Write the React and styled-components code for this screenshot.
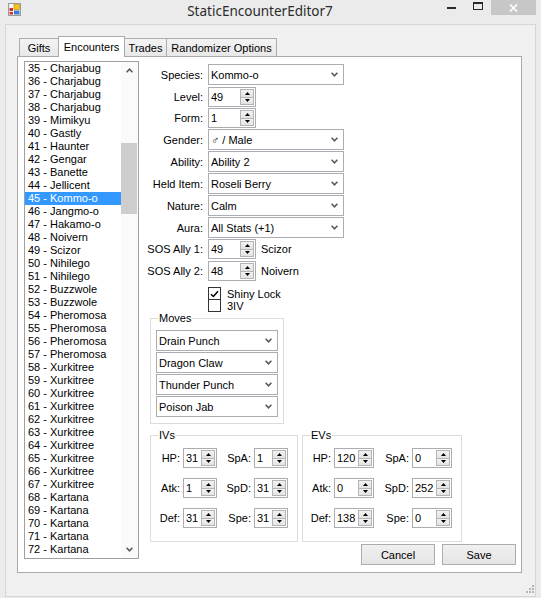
import React from 'react';
import styled, { createGlobalStyle } from 'styled-components';

const GlobalStyle = createGlobalStyle`
  html, body { margin: 0; padding: 0; background: #ebebeb; }
  * { box-sizing: border-box; }
  body {
    font-family: "Liberation Sans", Arial, sans-serif;
    font-size: 11px;
    color: #000;
  }
`;

const Window = styled.div`
  width: 541px;
  height: 598px;
  display: flex;
  flex-direction: column;
  padding: 0 5px 1px 5px;
  background-color: #ebebeb;
  overflow: hidden;
`;

const TitleBar = styled.div`
  height: 24px;
  flex-shrink: 0;
  display: flex;
  align-items: flex-start;
`;

const AppIcon = styled.svg`
  margin: 3px 0 0 3px;
  flex-shrink: 0;
`;

const Title = styled.div`
  flex: 1;
  text-align: center;
  padding: 3px 0 0 52px;
  font-family: "Noto Sans", "Open Sans", sans-serif;
  font-size: 13.5px;
  line-height: 16px;
  color: #2b2b2b;
`;

const Caption = styled.div`
  display: flex;
  align-items: flex-start;
`;

const MinGlyph = styled.div`
  width: 9px;
  height: 2px;
  background: #2a2a2a;
  margin: 7px 17px 0 0;
`;

const MaxGlyph = styled.div`
  width: 10px;
  height: 8px;
  border: 1px solid #2a2a2a;
  border-top-width: 2px;
  margin: 2px 8px 0 0;
`;

const CloseBtn = styled.div`
  width: 45px;
  height: 15px;
  background: #c7c7c7;
  display: flex;
  align-items: center;
  justify-content: center;
`;

const Client = styled.div`
  flex: 1;
  display: flex;
  flex-direction: column;
  background: #f0f0f0;
  border: 1px solid #d6d6d6;
  padding-top: 11px;
`;

const TabStrip = styled.div`
  height: 20px;
  display: flex;
  align-items: flex-end;
  margin-left: 13px;
`;

const Tab = styled.div`
  width: ${p => p.$w}px;
  height: ${p => (p.$active ? 21 : 18)}px;
  margin-bottom: ${p => (p.$active ? -1 : 0)}px;
  margin-left: ${p => (p.$first ? 0 : -1)}px;
  border: 1px solid #acacac;
  border-bottom: none;
  background: ${p => (p.$active ? '#fff' : 'linear-gradient(#f3f3f3, #e8e8e8)')};
  display: flex;
  align-items: center;
  justify-content: center;
  white-space: nowrap;
  padding-top: ${p => (p.$active ? 0 : 1)}px;
  position: relative;
  z-index: ${p => (p.$active ? 1 : 0)};
`;

const TabPage = styled.div`
  height: 517px;
  margin: 0 13px 0 11px;
  background: #fff;
  border: 1px solid #a9a9a9;
  display: flex;
  align-items: flex-start;
  padding: 4px 0 0 6px;
`;

const Footer = styled.div`
  flex: 1;
  display: flex;
  justify-content: flex-end;
  align-items: flex-end;
  padding: 0 0 2px 0;
`;

/* list box */
const ListBox = styled.div`
  width: 115px;
  height: 498px;
  flex-shrink: 0;
  border: 1px solid #a0a0a0;
  background: #fff;
  display: flex;
  overflow: hidden;
`;

const Items = styled.div`
  flex: 1;
  overflow: hidden;
`;

const Item = styled.div`
  height: 13px;
  line-height: 13px;
  padding-left: 3px;
  white-space: nowrap;
  background: ${p => (p.$selected ? '#3399ff' : 'transparent')};
  color: ${p => (p.$selected ? '#fff' : '#000')};
`;

const ScrollBar = styled.div`
  width: 17px;
  display: flex;
  flex-direction: column;
  background: #fafafa;
`;

const ScrollArrow = styled.div`
  height: 17px;
  display: flex;
  align-items: center;
  justify-content: center;
`;

const Thumb = styled.div`
  width: 16px;
  height: ${p => p.$h}px;
  margin-top: ${p => p.$top}px;
  background: #cdcdcd;
`;

const Spacer = styled.div`
  flex: 1;
`;

/* editor side */
const Editor = styled.div`
  flex: 1;
  display: flex;
  flex-direction: column;
  margin-left: 7px;
`;

const Field = styled.div`
  display: flex;
  align-items: center;
  height: ${p => p.$h}px;
  margin-top: ${p => p.$mt}px;
`;

const FieldLabel = styled.span`
  width: 57px;
  margin-right: 5px;
  text-align: right;
  white-space: nowrap;
`;

const SideText = styled.span`
  margin-left: 5px;
`;

const ComboBox = styled.div`
  width: ${p => p.$w}px;
  height: 21px;
  border: 1px solid #abadb3;
  background: #fff;
  display: flex;
  align-items: center;
  padding-left: 2px;
`;

const ComboText = styled.span`
  flex: 1;
  white-space: nowrap;
  overflow: hidden;
`;

const ComboArrow = styled.span`
  width: 17px;
  align-self: stretch;
  display: flex;
  align-items: center;
  justify-content: center;
`;

const NumBox = styled.div`
  width: ${p => p.$w}px;
  height: 20px;
  border: 1px solid #abadb3;
  background: #fff;
  display: flex;
`;

const NumText = styled.span`
  flex: 1;
  padding-left: 2px;
  line-height: 18px;
`;

const Spin = styled.div`
  width: 15px;
  display: flex;
  flex-direction: column;
  padding: 1px 1px 1px 0;
`;

const SpinBtn = styled.div`
  flex: 1;
  border: 1px solid #b4b4b4;
  margin-top: ${p => (p.$down ? -1 : 0)}px;
  background: linear-gradient(#f2f2f2, #e3e3e3);
  display: flex;
  align-items: center;
  justify-content: center;
`;

const CheckRow = styled.div`
  display: flex;
  align-items: center;
  height: 13px;
  margin-top: ${p => p.$mt}px;
  padding-left: 62px;
`;

const CheckBox = styled.div`
  width: 13px;
  height: 13px;
  flex-shrink: 0;
  border: 1px solid #333;
  background: #fff;
  display: flex;
  align-items: center;
  justify-content: center;
  overflow: hidden;
`;

const CheckText = styled.span`
  margin-left: 6px;
`;

const Group = styled.div`
  width: ${p => p.$w}px;
  height: ${p => p.$h}px;
  flex-shrink: 0;
  border: 1px solid #dcdcdc;
  margin-top: ${p => p.$mt || 0}px;
  margin-left: ${p => p.$ml || 0}px;
`;

const GroupTitle = styled.div`
  width: fit-content;
  margin: -7px 0 0 7px;
  padding: 0 1px;
  background: #fff;
  line-height: 13px;
`;

const MoveList = styled.div`
  display: flex;
  flex-direction: column;
  gap: 1px;
  margin: 5px 5px 0 5px;
`;

const GroupRow = styled.div`
  display: flex;
  gap: 4px;
  margin: 11px 0 0 4px;
`;

const StatGrid = styled.div`
  display: grid;
  grid-template-columns: ${p => p.$cols};
  grid-auto-rows: 20px;
  column-gap: 3px;
  row-gap: 10px;
  align-items: center;
  margin: 6px 0 0 2px;
`;

const StatLabel = styled.span`
  text-align: right;
  white-space: nowrap;
`;

const ButtonRow = styled.div`
  display: flex;
  justify-content: flex-end;
  gap: 7px;
  margin: 2px 5px 0 0;
`;

const Button = styled.div`
  width: 74px;
  height: 21px;
  border: 1px solid #acacac;
  background: linear-gradient(#f0f0f0, #e5e5e5);
  display: flex;
  align-items: center;
  justify-content: center;
`;

/* small drawings */
const Chevron = ({ up }) => (
  <svg width="7" height="5" viewBox="0 0 7 5">
    <path d={up ? 'M0.6 4.2 L3.5 1.2 L6.4 4.2' : 'M0.6 0.8 L3.5 3.8 L6.4 0.8'} fill="none" stroke="#5a5a5a" strokeWidth="1.6" />
  </svg>
);

const Tri = ({ down }) => (
  <svg width="5" height="3" viewBox="0 0 5 3">
    <path d={down ? 'M0 0 H5 L2.5 3 Z' : 'M0 3 H5 L2.5 0 Z'} fill="#000" />
  </svg>
);

const Combo = ({ w = 136, children }) => (
  <ComboBox $w={w}>
    <ComboText>{children}</ComboText>
    <ComboArrow><Chevron /></ComboArrow>
  </ComboBox>
);

const Numeric = ({ w = 48, value }) => (
  <NumBox $w={w}>
    <NumText>{value}</NumText>
    <Spin>
      <SpinBtn><Tri /></SpinBtn>
      <SpinBtn $down><Tri down /></SpinBtn>
    </Spin>
  </NumBox>
);

const Check = ({ checked, label, mt }) => (
  <CheckRow $mt={mt}>
    <CheckBox>
      {checked && (
        <svg width="9" height="8" viewBox="0 0 9 8">
          <path d="M1 4.2 L3.4 6.5 L8 1.2" fill="none" stroke="#000" strokeWidth="1.5" />
        </svg>
      )}
    </CheckBox>
    <CheckText>{label}</CheckText>
  </CheckRow>
);

const names = {
  35: 'Charjabug', 36: 'Charjabug', 37: 'Charjabug', 38: 'Charjabug', 39: 'Mimikyu',
  40: 'Gastly', 41: 'Haunter', 42: 'Gengar', 43: 'Banette', 44: 'Jellicent',
  45: 'Kommo-o', 46: 'Jangmo-o', 47: 'Hakamo-o', 48: 'Noivern', 49: 'Scizor',
  50: 'Nihilego', 51: 'Nihilego', 52: 'Buzzwole', 53: 'Buzzwole', 54: 'Pheromosa',
  55: 'Pheromosa', 56: 'Pheromosa', 57: 'Pheromosa',
};
const encounters = [];
for (let i = 35; i <= 72; i++) {
  encounters.push({ id: i, name: names[i] || (i <= 67 ? 'Xurkitree' : 'Kartana') });
}

const ivs = [['HP:', '31', 'SpA:', '1'], ['Atk:', '1', 'SpD:', '31'], ['Def:', '31', 'Spe:', '31']];
const evs = [['HP:', '120', 'SpA:', '0'], ['Atk:', '0', 'SpD:', '252'], ['Def:', '138', 'Spe:', '0']];

const StatBox = ({ title, w, cols, numW, rows }) => (
  <Group $w={w} $h={107}>
    <GroupTitle>{title}</GroupTitle>
    <StatGrid $cols={cols}>
      {rows.map(r => (
        <React.Fragment key={r[0]}>
          <StatLabel>{r[0]}</StatLabel>
          <Numeric w={numW[0]} value={r[1]} />
          <StatLabel>{r[2]}</StatLabel>
          <Numeric w={numW[1]} value={r[3]} />
        </React.Fragment>
      ))}
    </StatGrid>
  </Group>
);

export default function App() {
  return (
    <>
      <GlobalStyle />
      <Window>
        <TitleBar>
          <AppIcon width="13" height="13" viewBox="0 0 13 13">
            <rect x="0.5" y="0.5" width="12" height="12" fill="#f4f4f4" stroke="#9a9a9a" />
            <rect x="6" y="1.5" width="5.5" height="5" fill="#f2c418" stroke="#c28a00" strokeWidth="0.6" />
            <rect x="1.5" y="5" width="3.5" height="3" fill="#d62c2c" />
            <rect x="1.5" y="9" width="3.5" height="2.5" fill="#d62c2c" />
            <rect x="6" y="7.5" width="5.5" height="4" fill="#3a7bd5" />
          </AppIcon>
          <Title>StaticEncounterEditor7</Title>
          <Caption>
            <MinGlyph />
            <MaxGlyph />
            <CloseBtn>
              <svg width="9" height="8" viewBox="0 0 9 8">
                <path d="M1 0.5 L8 7.5 M8 0.5 L1 7.5" stroke="#fff" strokeWidth="1.6" />
              </svg>
            </CloseBtn>
          </Caption>
        </TitleBar>

        <Client>
          <TabStrip>
            <Tab $first $w={40}>Gifts</Tab>
            <Tab $active $w={67}>Encounters</Tab>
            <Tab $w={43}>Trades</Tab>
            <Tab $w={111}>Randomizer Options</Tab>
          </TabStrip>

          <TabPage>
            <ListBox>
              <Items>
                {encounters.map(e => (
                  <Item key={e.id} $selected={e.id === 45}>{e.id} - {e.name}</Item>
                ))}
              </Items>
              <ScrollBar>
                <ScrollArrow><Chevron up /></ScrollArrow>
                <Thumb $top={64} $h={71} />
                <Spacer />
                <ScrollArrow><Chevron /></ScrollArrow>
              </ScrollBar>
            </ListBox>

            <Editor>
              <Field $h={21} $mt={3}><FieldLabel>Species:</FieldLabel><Combo>Kommo-o</Combo></Field>
              <Field $h={20} $mt={2}><FieldLabel>Level:</FieldLabel><Numeric value="49" /></Field>
              <Field $h={20} $mt={1}><FieldLabel>Form:</FieldLabel><Numeric value="1" /></Field>
              <Field $h={21} $mt={1}><FieldLabel>Gender:</FieldLabel><Combo>♂ / Male</Combo></Field>
              <Field $h={21} $mt={1}><FieldLabel>Ability:</FieldLabel><Combo>Ability 2</Combo></Field>
              <Field $h={21} $mt={1}><FieldLabel>Held Item:</FieldLabel><Combo>Roseli Berry</Combo></Field>
              <Field $h={21} $mt={1}><FieldLabel>Nature:</FieldLabel><Combo>Calm</Combo></Field>
              <Field $h={21} $mt={1}><FieldLabel>Aura:</FieldLabel><Combo>All Stats (+1)</Combo></Field>
              <Field $h={20} $mt={1}>
                <FieldLabel>SOS Ally 1:</FieldLabel><Numeric value="49" /><SideText>Scizor</SideText>
              </Field>
              <Field $h={20} $mt={2}>
                <FieldLabel>SOS Ally 2:</FieldLabel><Numeric value="48" /><SideText>Noivern</SideText>
              </Field>
              <Check checked label="Shiny Lock" mt={6} />
              <Check label="3IV" mt={-1} />

              <Group $w={134} $h={106} $mt={6} $ml={4}>
                <GroupTitle>Moves</GroupTitle>
                <MoveList>
                  <Combo w={122}>Drain Punch</Combo>
                  <Combo w={122}>Dragon Claw</Combo>
                  <Combo w={122}>Thunder Punch</Combo>
                  <Combo w={122}>Poison Jab</Combo>
                </MoveList>
              </Group>

              <GroupRow>
                <StatBox title="IVs" w={148} cols="27px 34px 31px 34px" numW={[34, 34]} rows={ivs} />
                <StatBox title="EVs" w={160} cols="26px 40px 32px 40px" numW={[40, 40]} rows={evs} />
              </GroupRow>

              <ButtonRow>
                <Button>Cancel</Button>
                <Button>Save</Button>
              </ButtonRow>
            </Editor>
          </TabPage>

          <Footer>
            <svg width="9" height="9" viewBox="0 0 9 9">
              <g fill="#b5b5b5">
                <rect x="6" y="0" width="2" height="2" />
                <rect x="3" y="3" width="2" height="2" />
                <rect x="6" y="3" width="2" height="2" />
                <rect x="0" y="6" width="2" height="2" />
                <rect x="3" y="6" width="2" height="2" />
                <rect x="6" y="6" width="2" height="2" />
              </g>
            </svg>
          </Footer>
        </Client>
      </Window>
    </>
  );
}
